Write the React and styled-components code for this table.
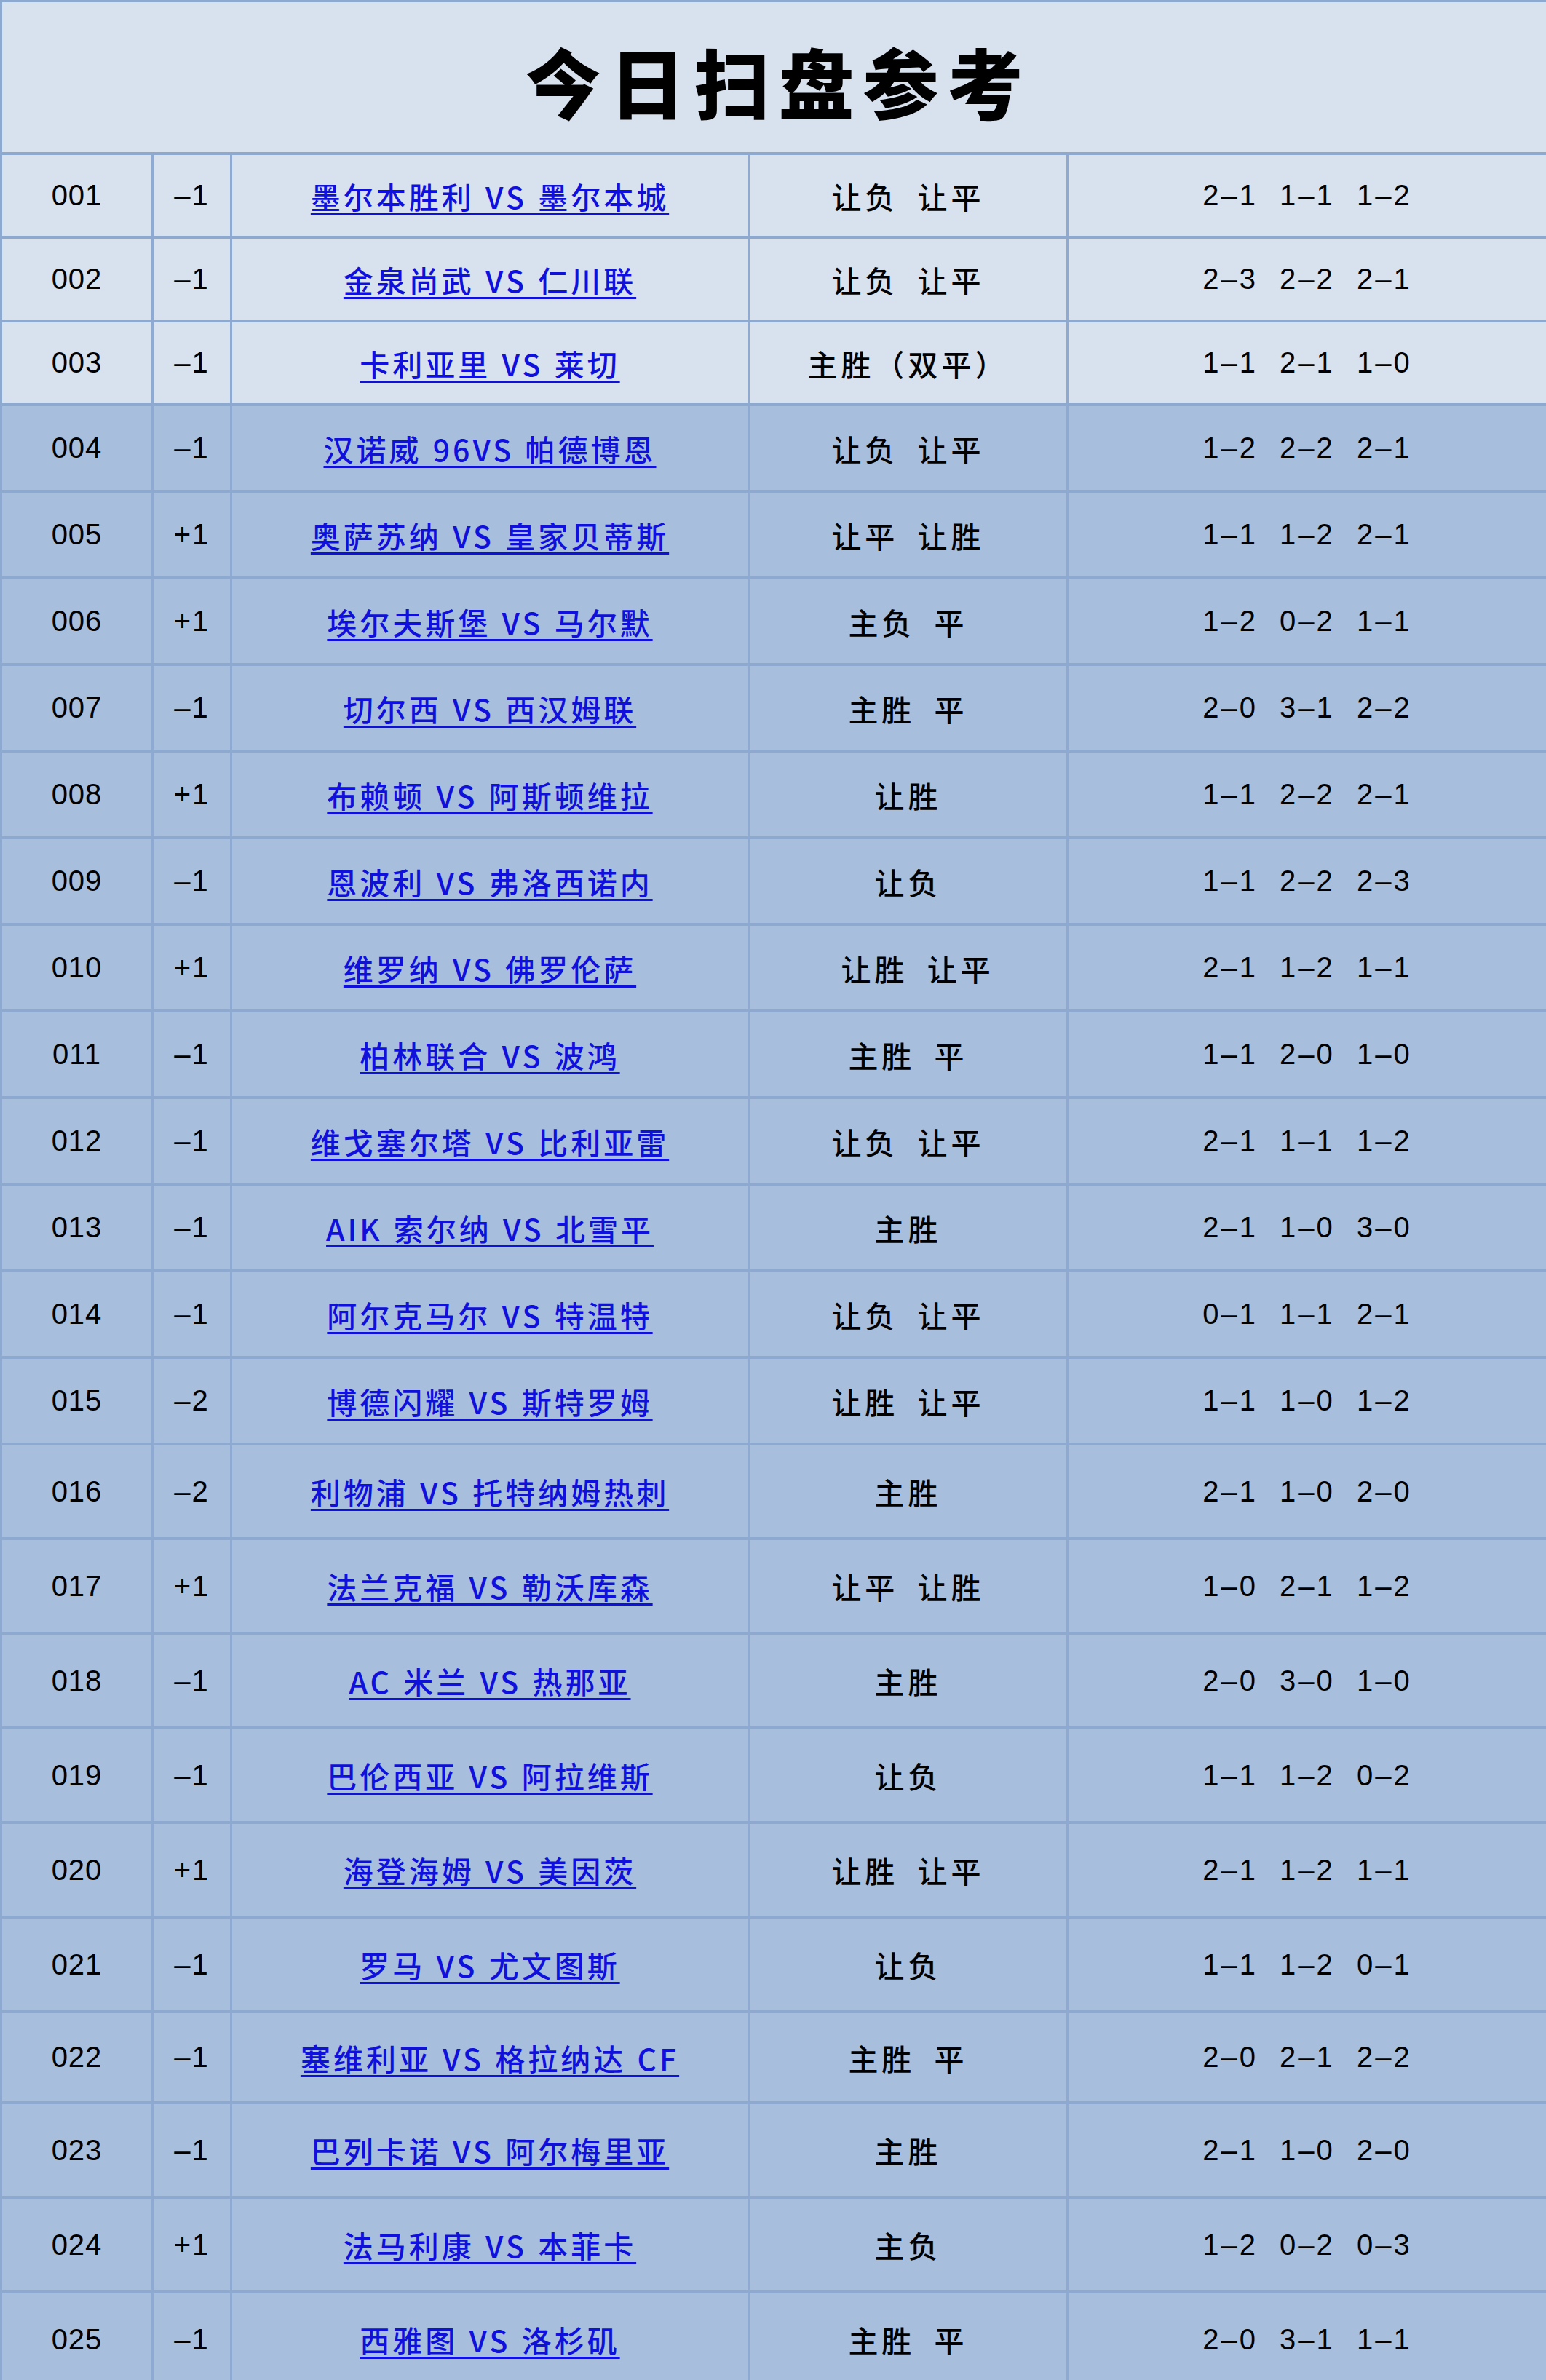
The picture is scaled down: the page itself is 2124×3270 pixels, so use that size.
import React from "react";
import styled, { createGlobalStyle } from "styled-components";

const GlobalStyle = createGlobalStyle`
  html, body {
    margin: 0;
    padding: 0;
    background: #a7bedd;
  }
  * {
    box-sizing: border-box;
  }
`;

const Sheet = styled.div`
  width: 2124px;
  border-left: 3px solid #8ea9d0;
  border-top: 3px solid #8ea9d0;
  font-family: "Liberation Sans", Arial, sans-serif;
  color: #000;
`;

const TitleBar = styled.div`
  height: 210px;
  background: #d8e1ee;
  border-bottom: 4px solid #8ea9d0;
  display: flex;
  align-items: center;
  justify-content: center;
  padding-top: 8px;
`;

const Title = styled.h1`
  margin: 0;
  font-family: "Noto Sans CJK SC", sans-serif;
  font-size: 104px;
  font-weight: 900;
  letter-spacing: 12px;
  padding-left: 12px;
`;

const Row = styled.div`
  display: grid;
  grid-template-columns: 208px 108px 711px 438px 1fr;
  height: ${(p) => p.$h}px;
  background: ${(p) => (p.$light ? "#d8e1ee" : "#a7bedd")};
  border-bottom: 4px solid #8ea9d0;
`;

const Cell = styled.div`
  display: flex;
  align-items: center;
  justify-content: center;
  border-right: 3px solid #8eaad3;
  white-space: nowrap;
  &:last-child {
    border-right: none;
  }
`;

const Num = styled.span`
  font-size: 40px;
  letter-spacing: 1px;
`;

const Handicap = styled.span`
  font-size: 40px;
  letter-spacing: 2px;
`;

const Match = styled.a`
  font-family: "Noto Sans CJK SC", sans-serif;
  font-size: 41px;
  font-weight: 500;
  letter-spacing: 4px;
  word-spacing: 2px;
  color: #1010dc;
  text-decoration: underline;
  text-decoration-thickness: 3px;
  text-underline-offset: 6px;
  cursor: pointer;
`;

const Pick = styled.span`
  font-family: "Noto Sans CJK SC", sans-serif;
  font-size: 41px;
  font-weight: 500;
  letter-spacing: 5px;
  word-spacing: 12px;
  white-space: pre;
`;

const Score = styled.span`
  font-size: 40px;
  letter-spacing: 3px;
  word-spacing: 16px;
`;

const rows = [
  ["001", "–1", "墨尔本胜利 VS 墨尔本城", "让负 让平", "2–1 1–1 1–2"],
  ["002", "–1", "金泉尚武 VS 仁川联", "让负 让平", "2–3 2–2 2–1"],
  ["003", "–1", "卡利亚里 VS 莱切", "主胜（双平）", "1–1 2–1 1–0"],
  ["004", "–1", "汉诺威 96VS 帕德博恩", "让负 让平", "1–2 2–2 2–1"],
  ["005", "+1", "奥萨苏纳 VS 皇家贝蒂斯", "让平 让胜", "1–1 1–2 2–1"],
  ["006", "+1", "埃尔夫斯堡 VS 马尔默", "主负 平", "1–2 0–2 1–1"],
  ["007", "–1", "切尔西 VS 西汉姆联", "主胜 平", "2–0 3–1 2–2"],
  ["008", "+1", "布赖顿 VS 阿斯顿维拉", "让胜", "1–1 2–2 2–1"],
  ["009", "–1", "恩波利 VS 弗洛西诺内", "让负", "1–1 2–2 2–3"],
  ["010", "+1", "维罗纳 VS 佛罗伦萨", " 让胜 让平", "2–1 1–2 1–1"],
  ["011", "–1", "柏林联合 VS 波鸿", "主胜 平", "1–1 2–0 1–0"],
  ["012", "–1", "维戈塞尔塔 VS 比利亚雷", "让负 让平", "2–1 1–1 1–2"],
  ["013", "–1", "AIK 索尔纳 VS 北雪平", "主胜", "2–1 1–0 3–0"],
  ["014", "–1", "阿尔克马尔 VS 特温特", "让负 让平", "0–1 1–1 2–1"],
  ["015", "–2", "博德闪耀 VS 斯特罗姆", "让胜 让平", "1–1 1–0 1–2"],
  ["016", "–2", "利物浦 VS 托特纳姆热刺", "主胜", "2–1 1–0 2–0"],
  ["017", "+1", "法兰克福 VS 勒沃库森", "让平 让胜", "1–0 2–1 1–2"],
  ["018", "–1", "AC 米兰 VS 热那亚", "主胜", "2–0 3–0 1–0"],
  ["019", "–1", "巴伦西亚 VS 阿拉维斯", "让负", "1–1 1–2 0–2"],
  ["020", "+1", "海登海姆 VS 美因茨", "让胜 让平", "2–1 1–2 1–1"],
  ["021", "–1", "罗马 VS 尤文图斯", "让负", "1–1 1–2 0–1"],
  ["022", "–1", "塞维利亚 VS 格拉纳达 CF", "主胜 平", "2–0 2–1 2–2"],
  ["023", "–1", "巴列卡诺 VS 阿尔梅里亚", "主胜", "2–1 1–0 2–0"],
  ["024", "+1", "法马利康 VS 本菲卡", "主负", "1–2 0–2 0–3"],
  ["025", "–1", "西雅图 VS 洛杉矶", "主胜 平", "2–0 3–1 1–1"],
];

// row heights follow the screenshot: the sheet gets taller further down
function rowHeight(i) {
  if (i < 3) return 115;
  if (i < 15) return 119;
  if (i === 21) return 125;
  return 130;
}

export default function App() {
  return (
    <>
      <GlobalStyle />
      <Sheet>
        <TitleBar>
          <Title>今日扫盘参考</Title>
        </TitleBar>
        {rows.map(([no, hc, match, pick, score], i) => (
          <Row key={no} $h={rowHeight(i)} $light={i < 3}>
            <Cell>
              <Num>{no}</Num>
            </Cell>
            <Cell>
              <Handicap>{hc}</Handicap>
            </Cell>
            <Cell>
              <Match>{match}</Match>
            </Cell>
            <Cell>
              <Pick>{pick}</Pick>
            </Cell>
            <Cell>
              <Score>{score}</Score>
            </Cell>
          </Row>
        ))}
      </Sheet>
    </>
  );
}
